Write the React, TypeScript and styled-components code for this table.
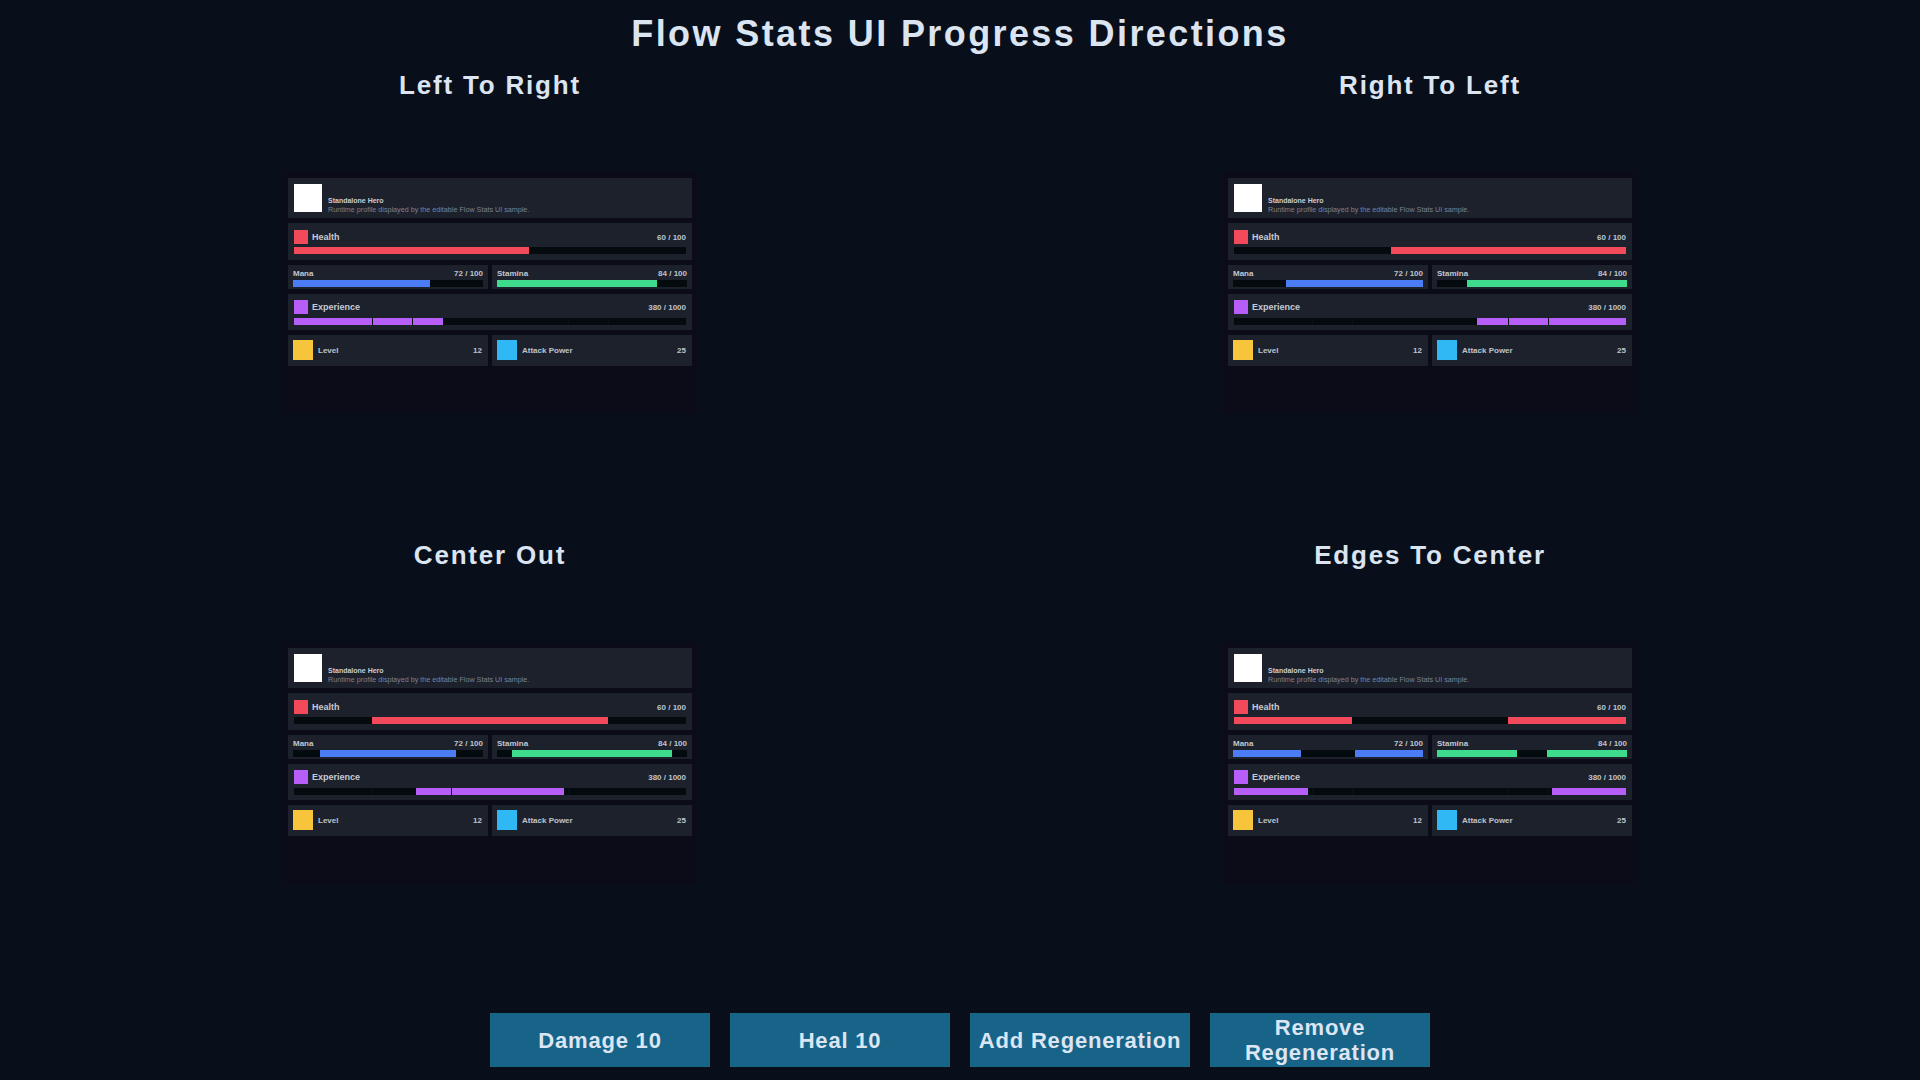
import styled, { createGlobalStyle } from "styled-components";

type Direction = "ltr" | "rtl" | "center" | "edges";

const GlobalStyle = createGlobalStyle`
	html, body {
		margin: 0;
		padding: 0;
		background: #080e1a;
	}
	body {
		font-family: "Liberation Sans", Arial, sans-serif;
	}
	* {
		box-sizing: border-box;
	}
`;

const Page = styled.main`
	width: 1920px;
	height: 1080px;
	padding: 12px 20px 0;
	display: flex;
	flex-direction: column;
	background: #080e1a;
	overflow: hidden;
`;

const Title = styled.h1`
	margin: 0;
	height: 44px;
	font-size: 36px;
	line-height: 44px;
	font-weight: 700;
	letter-spacing: 2.4px;
	text-align: center;
	color: #dbe4f1;
`;

const Grid = styled.div`
	margin-top: 12px;
	display: grid;
	grid-template-columns: 940px 940px;
	grid-auto-rows: 470px;
`;

const Section = styled.section`
	display: flex;
	flex-direction: column;
	align-items: center;
`;

const SectionTitle = styled.h2`
	margin: 0;
	font-size: 26px;
	line-height: 34px;
	font-weight: 700;
	letter-spacing: 1.8px;
	color: #dbe4f1;
`;

const Card = styled.div`
	margin-top: 70px;
	width: 416px;
	height: 242px;
	padding: 6px;
	background: #0c0c19;
	display: flex;
	flex-direction: column;
	gap: 5px;
`;

const Panel = styled.div`
	background: #1d212c;
	color: #c4c9d3;
`;

const Header = styled(Panel)`
	height: 40px;
	padding: 6px;
	display: flex;
	gap: 6px;
`;

const Avatar = styled.div`
	width: 28px;
	height: 28px;
	flex: none;
	background: #ffffff;
`;

const HeroText = styled.div`
	margin-top: 12px;
	line-height: 9px;
	font-size: 7px;
	white-space: nowrap;
`;

const HeroName = styled.div`
	font-weight: 700;
	color: #c9cdd6;
`;

const HeroDesc = styled.div`
	font-size: 7.2px;
	color: #7b8395;
`;

const BigPanel = styled(Panel)<{ $top: number; $gap: number }>`
	padding: ${p => p.$top}px 6px ${p => p.$top - 1}px;
	display: flex;
	flex-direction: column;
	gap: ${p => p.$gap}px;
`;

const BigHead = styled.div`
	height: 14px;
	display: flex;
	align-items: center;
	gap: 4px;
`;

const Swatch = styled.span<{ $color: string; $size: number }>`
	width: ${p => p.$size}px;
	height: ${p => p.$size}px;
	flex: none;
	background: ${p => p.$color};
`;

const BigLabel = styled.span`
	font-size: 9px;
	font-weight: 700;
	color: #c6cbd5;
`;

const Value = styled.span`
	margin-left: auto;
	font-size: 8px;
	font-weight: 700;
	color: #bfc4ce;
`;

const MiniRow = styled.div`
	display: grid;
	grid-template-columns: 1fr 1fr;
	gap: 4px;
`;

const MiniPanel = styled(Panel)`
	height: 24px;
	padding: 4px 5px 2px;
	display: flex;
	flex-direction: column;
	gap: 1px;
`;

const MiniHead = styled.div`
	display: flex;
	align-items: center;
	line-height: 10px;
	font-size: 8px;
	font-weight: 700;
	color: #c2c7d1;
`;

const Track = styled.div`
	position: relative;
	height: 7px;
	flex: none;
	background: #040b0e;
	overflow: hidden;
`;

const Fill = styled.div<{ $color: string }>`
	position: absolute;
	top: 0;
	bottom: 0;
	background: ${p => p.$color};
`;

const Divider = styled.div`
	position: absolute;
	top: 0;
	bottom: 0;
	width: 1px;
	background: #0a1015;
`;

const StatRow = styled.div`
	display: grid;
	grid-template-columns: 1fr 1fr;
	gap: 4px;
`;

const StatPanel = styled(Panel)`
	height: 31px;
	padding: 5px 6px 6px 5px;
	display: flex;
	align-items: center;
	gap: 5px;
`;

const StatLabel = styled.span`
	font-size: 8px;
	font-weight: 700;
	color: #bec3cd;
`;

const ButtonRow = styled.div`
	margin-top: 5px;
	display: flex;
	justify-content: center;
	gap: 20px;
`;

const ActionButton = styled.button`
	width: 220px;
	height: 54px;
	padding: 0 6px;
	border: none;
	background: #176488;
	color: #dce5f3;
	font-family: "Liberation Sans", Arial, sans-serif;
	font-size: 22px;
	line-height: 25px;
	font-weight: 700;
	letter-spacing: 0.8px;
	cursor: pointer;
`;

function segments(f: number, dir: Direction): [number, number][] {
	switch (dir) {
		case "ltr":
			return [[0, f]];
		case "rtl":
			return [[1 - f, 1]];
		case "center":
			return [[0.5 - f / 2, 0.5 + f / 2]];
		default:
			return [
				[0, f / 2],
				[1 - f / 2, 1],
			];
	}
}

function Bar({
	value,
	max,
	color,
	dir,
	ticks = [],
}: {
	value: number;
	max: number;
	color: string;
	dir: Direction;
	ticks?: number[];
}) {
	const f = value / max;
	return (
		<Track>
			{segments(f, dir).map(([a, b], i) => (
				<Fill
					key={i}
					$color={color}
					style={{ left: `${a * 100}%`, width: `${(b - a) * 100}%` }}
				/>
			))}
			{ticks.map(t => (
				<Divider key={t} style={{ left: `${t * 100}%` }} />
			))}
		</Track>
	);
}

const xpTicks: Record<Direction, number[]> = {
	ltr: [0.2, 0.3, 0.7, 0.8],
	rtl: [0.2, 0.3, 0.7, 0.8],
	center: [0.2, 0.4, 0.7],
	edges: [0.2, 0.3, 0.7, 0.8],
};

function StatsCard({ dir }: { dir: Direction }) {
	return (
		<Card>
			<Header>
				<Avatar />
				<HeroText>
					<HeroName>Standalone Hero</HeroName>
					<HeroDesc>Runtime profile displayed by the editable Flow Stats UI sample.</HeroDesc>
				</HeroText>
			</Header>
			<BigPanel $top={7} $gap={3}>
				<BigHead>
					<Swatch $color="#f24a5a" $size={14} />
					<BigLabel>Health</BigLabel>
					<Value>60 / 100</Value>
				</BigHead>
				<Bar value={60} max={100} color="#f24a5a" dir={dir} />
			</BigPanel>
			<MiniRow>
				<MiniPanel>
					<MiniHead>
						Mana
						<Value>72 / 100</Value>
					</MiniHead>
					<Bar value={72} max={100} color="#4b7bf5" dir={dir} />
				</MiniPanel>
				<MiniPanel>
					<MiniHead>
						Stamina
						<Value>84 / 100</Value>
					</MiniHead>
					<Bar value={84} max={100} color="#3ddb8b" dir={dir} />
				</MiniPanel>
			</MiniRow>
			<BigPanel $top={6} $gap={4}>
				<BigHead>
					<Swatch $color="#b65ef7" $size={14} />
					<BigLabel>Experience</BigLabel>
					<Value>380 / 1000</Value>
				</BigHead>
				<Bar value={380} max={1000} color="#b65ef7" dir={dir} ticks={xpTicks[dir]} />
			</BigPanel>
			<StatRow>
				<StatPanel>
					<Swatch $color="#f7c53c" $size={20} />
					<StatLabel>Level</StatLabel>
					<Value>12</Value>
				</StatPanel>
				<StatPanel>
					<Swatch $color="#30b8f4" $size={20} />
					<StatLabel>Attack Power</StatLabel>
					<Value>25</Value>
				</StatPanel>
			</StatRow>
		</Card>
	);
}

const sections: { title: string; dir: Direction }[] = [
	{ title: "Left To Right", dir: "ltr" },
	{ title: "Right To Left", dir: "rtl" },
	{ title: "Center Out", dir: "center" },
	{ title: "Edges To Center", dir: "edges" },
];

export default function App() {
	return (
		<>
			<GlobalStyle />
			<Page>
				<Title>Flow Stats UI Progress Directions</Title>
				<Grid>
					{sections.map(s => (
						<Section key={s.dir}>
							<SectionTitle>{s.title}</SectionTitle>
							<StatsCard dir={s.dir} />
						</Section>
					))}
				</Grid>
				<ButtonRow>
					<ActionButton>Damage 10</ActionButton>
					<ActionButton>Heal 10</ActionButton>
					<ActionButton>Add Regeneration</ActionButton>
					<ActionButton>Remove Regeneration</ActionButton>
				</ButtonRow>
			</Page>
		</>
	);
}
